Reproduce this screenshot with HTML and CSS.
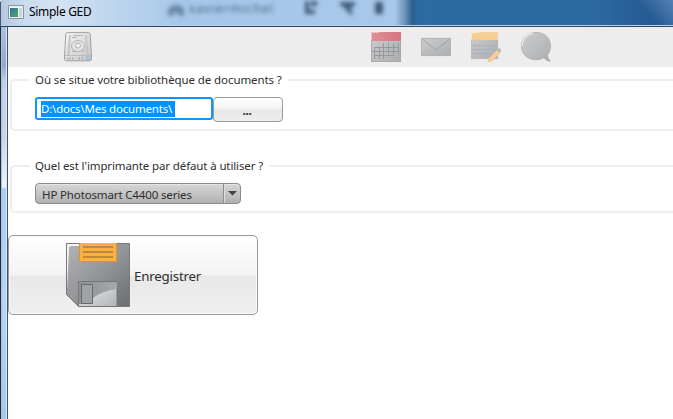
FILE: index.html
```html
<!DOCTYPE html>
<html lang="fr">
<head>
<meta charset="utf-8">
<title>Simple GED</title>
<link rel="stylesheet" href="styles.css">
</head>
<body>
<div class="window">
  <header class="titlebar">
    <svg class="glass" width="673" height="25" viewBox="0 0 673 25" aria-hidden="true">
      <defs>
        <linearGradient id="glassBlue"><stop offset="0" stop-color="#b3c8e0"/><stop offset=".06" stop-color="#cbdcef"/><stop offset=".15" stop-color="#d3e2f3"/><stop offset=".28" stop-color="#bdd5ee"/><stop offset=".45" stop-color="#a7c7e8"/><stop offset="1" stop-color="#a8c8e9"/></linearGradient>
        <linearGradient id="desk"><stop offset="0" stop-color="#2e6aa2"/><stop offset=".7" stop-color="#2d69a1"/><stop offset=".9" stop-color="#245b92"/><stop offset="1" stop-color="#235a91"/></linearGradient>
        <linearGradient id="edge"><stop offset="0" stop-color="#a8c8e9"/><stop offset=".45" stop-color="#6990b6"/><stop offset=".75" stop-color="#2d608f"/><stop offset="1" stop-color="#2e6aa2"/></linearGradient>
        <linearGradient id="corner" gradientUnits="userSpaceOnUse" x1="650" y1="18" x2="672" y2="0"><stop offset="0" stop-color="#5f88b8" stop-opacity="0"/><stop offset="1" stop-color="#5f88b8" stop-opacity=".85"/></linearGradient>
        <filter id="soft" x="-30%" y="-60%" width="160%" height="220%"><feGaussianBlur stdDeviation="2"/></filter>
      </defs>
      <rect width="400" height="25" fill="url(#glassBlue)"/>
      <rect x="416" width="257" height="25" fill="url(#desk)"/>
      <rect x="394" width="23" height="25" fill="url(#edge)"/>
      <rect x="600" width="73" height="25" fill="url(#corner)"/>
      <g filter="url(#soft)" fill="#405a77">
        <path d="M167 16V9l5-4h6l5 4v7h-5v-3h-6v3z" opacity=".6"/>
        <text class="behind" x="188" y="13" textLength="84">xaviermichel</text>
        <path d="M304 1h4v9h6v4h-10zM310 1h6v5h-6z"/>
        <path d="M339 2h15v3l-5 4 4 5h-5l-3-5-6-4z"/>
        <path d="M374 2h8v12h-8z"/>
      </g>
    </svg>
    <svg class="app-icon" width="16" height="14" viewBox="0 0 16 14" aria-hidden="true">
      <defs><linearGradient id="app" x2="1" y2="1"><stop stop-color="#366ca0"/><stop offset="1" stop-color="#45ad68"/></linearGradient></defs>
      <path d="M.5.5h15v13H.5z" fill="#eef1f1" stroke="#8a9298"/><path d="M2 3h8v9H2z" fill="url(#app)"/><path d="M11 3h3v9h-3z" fill="#c7d8d2"/>
    </svg>
    <h1 class="title">Simple GED</h1>
  </header>
  <div class="frame">
    <main class="content">
      <nav class="toolbar">
        <svg class="tool drive" width="28" height="30" viewBox="0 0 28 30">
          <defs><linearGradient id="dr" x2="1" y2="1"><stop stop-color="#f6f6f6"/><stop offset="1" stop-color="#c5c5c5"/></linearGradient></defs>
          <path d="M3.500.6h21q1.500 0 1.700 1.500L27.500 24v3q0 1.800-1.800 1.800H2.300Q.5 28.800.5 27v-3L1.800 2.100Q2 .6 3.500.6z" fill="url(#dr)" stroke="#a2a2a2"/>
          <path d="M5 3h2l-1 20H3zM21 3h2l2 20h-3z" fill="#c8c8c8"/>
          <path d="M9 3.500h10M8 5.500h5" stroke="#b5b5b5"/>
          <ellipse cx="14" cy="14" rx="6.500" ry="5.500" fill="#e4e4e4" stroke="#b5b5b5"/><circle cx="14" cy="13.500" r="2.600" fill="#f1f1f1" stroke="#b0b0b0"/>
          <path d="M8 19l4 1M17 18l3 2" stroke="#aaa"/><path d="M1 23.500h26" stroke="#bcbcbc"/>
          <path d="M3 26.500h7" stroke="#aaa" stroke-width="2" stroke-dasharray="1.500 1"/><path d="M15.500 25v3M18.500 25v3" stroke="#aaa"/><circle cx="24" cy="26" r="1.500" fill="#e4edf5" stroke="#8aa8c5"/>
        </svg>
        <div class="tools">
          <svg class="tool" width="30" height="30" viewBox="0 0 30 30">
            <defs><linearGradient id="g" x2="1" y2="1"><stop stop-color="#cdcecf"/><stop offset="1" stop-color="#aaacad"/></linearGradient><linearGradient id="r" x2="1"><stop stop-color="#df8f96"/><stop offset="1" stop-color="#d5777f"/></linearGradient></defs>
            <path d="M0 0h30v30H0z" fill="url(#g)"/><path d="M0 0h30v9H0z" fill="url(#r)"/><path d="M29.500 9v20.500H.5V9" fill="none" stroke="#a3a5a6" stroke-width=".7"/>
            <path d="M.5 8V1q0-.5.500-.5h7" fill="none" stroke="#f0c0c4"/>
            <path d="M3.500 15v12M8.500 15v12M12.500 11v16M17.500 11v11M22.500 11v11M27.500 11v11M3 15.500h25M1 19.500h27M3 23.500h20" fill="none" stroke="#929597" stroke-width=".9"/>
          </svg>
          <svg class="tool" width="30" height="30" viewBox="0 0 30 30"><path d="M.4 6.400h29.200v17.200H.4z" fill="url(#g)" stroke="#a9abac" stroke-width=".8"/><path d="M1.500 7l13.500 11L28.500 7" fill="none" stroke="#9b9d9f" stroke-width=".9"/></svg>
          <svg class="tool" width="30" height="30" viewBox="0 0 30 30">
            <defs><linearGradient id="o" y2="1" x2="0"><stop stop-color="#f5d3a0"/><stop offset="1" stop-color="#f6cc8b"/></linearGradient></defs>
            <path d="M.4.4h26.200v26.200H.4z" fill="url(#g)" stroke="#b2b3b4" stroke-width=".8"/><path d="M0 0h27v8H0z" fill="url(#o)"/><path d="M.5 7V.5h7" fill="none" stroke="#fae8cc"/>
            <path d="M1 13.500h25M1 17.500h25M1 21.500h21" stroke="#a6b0c4" stroke-width=".9"/><path d="M3.500 9v17" stroke="#d9a9a2" stroke-width=".8"/>
            <path d="M17 30l1-4 8-8 3 3-8 8z" fill="#f4cf99" stroke="#e0bd88" stroke-width=".5"/><path d="M26 18l1.500-1.500q2-.5 2.500 1.500l-.5 2-1 1z" fill="#b3b5b8"/>
          </svg>
          <svg class="tool" width="30" height="30" viewBox="0 0 30 30"><path d="M15 .4c8.500 0 14.600 5.400 14.600 13.600 0 3.700-1 6.500-3 8.800.2 2.700 1.500 5 3 6.600-3-.3-5.500-1.800-6.700-3.700C20.500 27 18 27.800 15 27.800 6.500 27.800.4 22 .4 14S6.500.4 15 .4z" fill="url(#g)" stroke="#aeb0b1" stroke-width=".8"/><path d="M1 14C1 8 5 2.500 12 1.200" fill="none" stroke="#eee" stroke-width="1.300"/></svg>
        </div>
      </nav>
      <section class="group library">
        <h2 class="legend"><span class="q1">Où se situe votre bibliothèque de documents ?</span></h2>
        <div class="row"><div class="field"><span class="selected">D:\docs\Mes documents\</span></div><button class="browse">...</button></div>
      </section>
      <section class="group printer">
        <h2 class="legend"><span class="q2">Quel est l'imprimante par défaut à utiliser ?</span></h2>
        <div class="combo"><span class="value">HP Photosmart C4400 series</span><span class="arrow"><svg width="9" height="5" viewBox="0 0 9 5"><path d="M0 0h9L4.500 4.500z" fill="#444"/></svg></span></div>
      </section>
      <button class="save">
        <svg width="64" height="64" viewBox="0 0 64 64">
          <defs><linearGradient id="f" x2="1" y2="1"><stop stop-color="#b1b3b5"/><stop offset=".5" stop-color="#939598"/><stop offset="1" stop-color="#6b6c6f"/></linearGradient><linearGradient id="m" x2="1" y2="1"><stop stop-color="#a7a8aa"/><stop offset=".5" stop-color="#d0d1d2"/><stop offset="1" stop-color="#b2b3b4"/></linearGradient><linearGradient id="sh"><stop stop-color="#8f9193"/><stop offset="1" stop-color="#a6a8a9"/></linearGradient></defs>
          <path d="M.5.5h63v63h-51L.5 51.500z" fill="url(#f)" stroke="#77797b"/>
          <path d="M1 48V1h12v2H5Q3 3 3 6z" fill="#f4f4f4"/>
          <path d="M13 0h38v19H13z" fill="#fbb040"/><path d="M13.500 0v18.500h37V0" fill="none" stroke="#d7953a"/><path d="M17 4h30M17 9h30M17 14h30" stroke="#bd8744" stroke-width="2"/>
          <path d="M12.500 38.500h38.500v25H12.500z" fill="url(#m)" stroke="#747678"/><path d="M13 39h37.500v7Q36 48 27 55V41H16v20h-3z" fill="url(#sh)"/>
          <path d="M15.500 41.500h11v19h-11z" fill="#a0a2a4" stroke="#67696b"/>
        </svg>
        <span class="save-label">Enregistrer</span>
      </button>
    </main>
  </div>
</div>
</body>
</html>
```
FILE: styles.css
```css
* { box-sizing: border-box; }
body { margin: 0; overflow: hidden; font-family: "Noto Sans", "Open Sans", sans-serif; font-size: 11.5px; color: #2e2e2e; }
h1, h2 { margin: 0; font-size: 11.5px; font-weight: 400; }
span, h1 { white-space: nowrap; }
button { font: inherit; color: inherit; padding: 0; }
svg { display: block; flex: none; }
.window { width: 673px; height: 419px; display: flex; flex-direction: column; }
.titlebar { position: relative; height: 27px; flex: none; display: flex; align-items: flex-start; padding: 5px 0 0 8px; gap: 5px; border-bottom: 1px solid #2c4766; box-shadow: inset 0 -1px #b9d0e9; border-left: 1px solid #49596b; border-top-left-radius: 3px; }
.glass { position: absolute; left: 0; top: 0; }
.behind { font-size: 12px; opacity: .95; }
.app-icon { position: relative; margin-left: -1px; }
.title { position: relative; color: #000; font-size: 12px; line-height: 14px; letter-spacing: -.3px; }
.frame { flex: 1; display: flex; padding-left: 8px; background: linear-gradient(90deg, #232c3a 0 1px, #a9bfd8 1px 2px, transparent 2px 6px, #d6e8fa 6px 7px, #43526a 7px 8px, transparent 8px), linear-gradient(#aac3df 0, #94a9c4 38px, #c0d2ea 55px, #c7d5e9 110px, #edf4fb 160px, #a9cdf4 162px, #b6d5f7 270px, #a8c9eb 392px); }
.content { flex: 1; background: #fff; display: flex; flex-direction: column; }
.toolbar { height: 40px; flex: none; background: #ededed; display: flex; padding: 5px 0 0 56px; }
.tools { display: flex; gap: 20px; margin-left: 279px; }
.group { border: 2px solid #eee; border-right: 0; border-radius: 5px 0 0 5px; margin-left: 2px; padding-left: 18px; flex: none; }
.library { margin-top: 12px; height: 52px; }
.printer { margin-top: 34px; height: 48px; }
.legend { margin-top: -9px; height: 16px; line-height: 16px; }
.legend span { display: inline-block; background: #fff; padding: 0 6px 0 5px; }
.q1 { width: 258px; letter-spacing: -.09px; }
.q2 { width: 239px; letter-spacing: -.12px; }
.row { display: flex; margin: 9px 0 0 5px; }
.field { width: 178px; height: 23px; border: 2px solid #1293ff; border-radius: 3px; padding: 2px 4px; }
.selected { display: block; width: 134px; height: 16px; line-height: 16px; background: #0093ff; color: #fff; letter-spacing: -.2px; }
.browse { width: 70px; height: 25px; border: 1px solid #999; border-radius: 4px; background: linear-gradient(#fff, #f3f3f3 48%, #e7e7e7 52%, #efefef); line-height: 24px; font-size: 12px; font-weight: 700; letter-spacing: -.3px; padding: 1px 2px 0 0; }
.combo { display: flex; width: 206px; height: 21px; margin: 9px 0 0 5px; border: 1px solid #8b8b8b; border-radius: 4px; background: linear-gradient(#d7d7d7, #b1b1b1); box-shadow: inset 0 1px #e4e4e4; }
.value { width: 188px; padding-left: 6px; line-height: 21px; border-right: 1px solid #8e8e8e; letter-spacing: -.14px; }
.arrow { flex: 1; display: flex; align-items: center; justify-content: center; box-shadow: inset 1px 0 #ddd; }
.save { width: 250px; height: 80px; margin-top: 22px; flex: none; display: flex; align-items: center; gap: 4px; padding-left: 57px; border: 1px solid #999; border-radius: 5px; background: linear-gradient(#fff, #f3f3f3 50%, #e8e8e8 52%, #f0f0f0); font-size: 13.300px; box-shadow: inset 0 0 0 1px #fafafa; }
.save-label { padding-top: 2px; letter-spacing: -.2px; }
```
